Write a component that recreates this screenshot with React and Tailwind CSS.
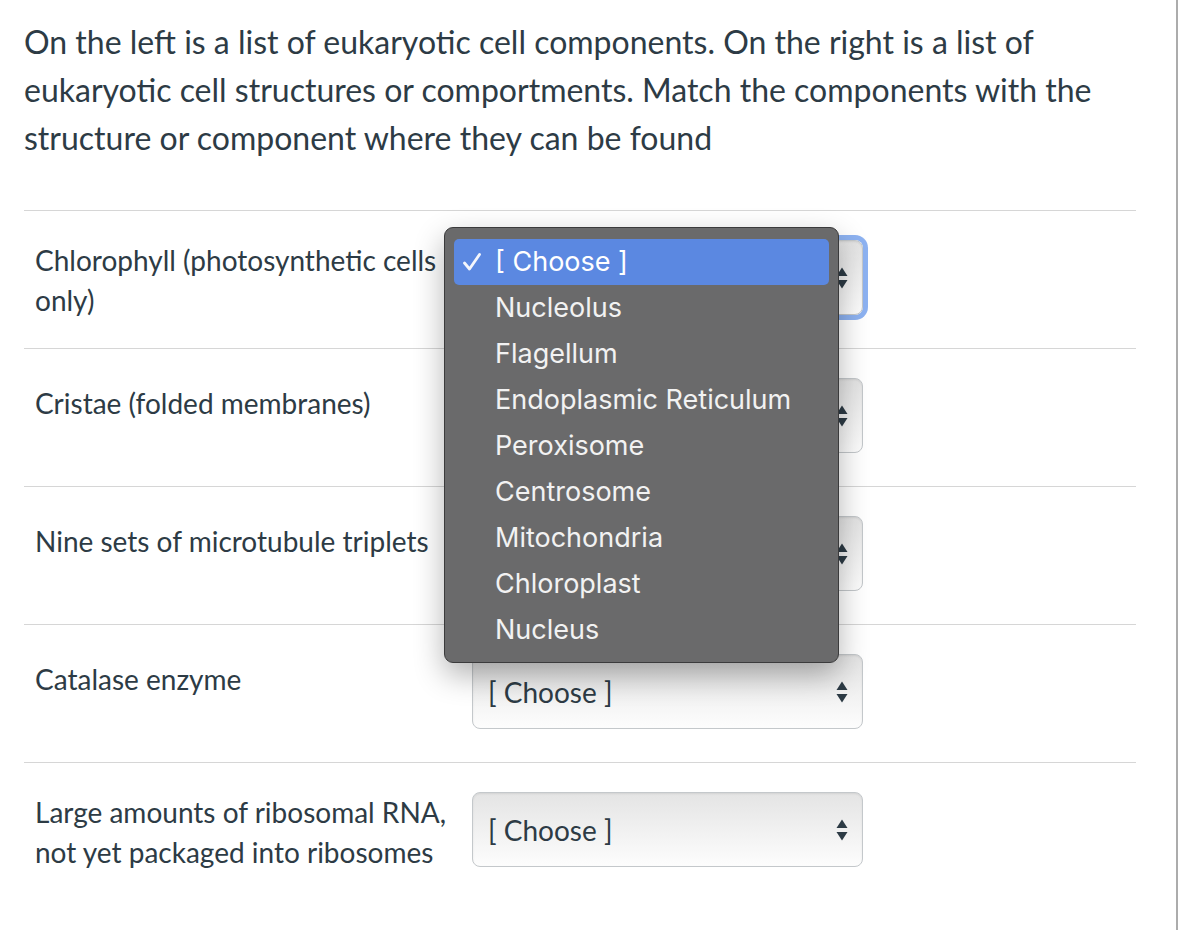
import React from 'react';

const rows = [
    { label: 'Chlorophyll (photosynthetic cells only)', pad: 'pt-0', focused: true, covered: true },
    { label: 'Cristae (folded membranes)', pad: 'pt-[5px]', covered: true },
    { label: 'Nine sets of microtubule triplets', pad: 'pt-[5px]', covered: true },
    { label: 'Catalase enzyme', pad: 'pt-[5px]' },
    { label: 'Large amounts of ribosomal RNA, not yet packaged into ribosomes', pad: 'pt-0' },
];

const options = [
    '[ Choose ]',
    'Nucleolus',
    'Flagellum',
    'Endoplasmic Reticulum',
    'Peroxisome',
    'Centrosome',
    'Mitochondria',
    'Chloroplast',
    'Nucleus',
];

function Arrows() {
    return (
        <svg width="12" height="24" viewBox="0 0 12 24" className="shrink-0">
            <path d="M6 1.5 L11.5 10 L0.5 10 Z" fill="#2d3b45" />
            <path d="M6 22.5 L11.5 14 L0.5 14 Z" fill="#2d3b45" />
        </svg>
    );
}

function FakeSelect({ focused, covered }) {
    return (
        <div
            className={
                'w-[391px] h-[75px] shrink-0 rounded-[8px] border border-[#c4c8cb] bg-gradient-to-b from-[#e4e4e4] to-[#fdfdfd] shadow-[inset_0_1px_2px_rgba(0,0,0,0.08)] flex items-center justify-between pl-[15px] pr-[14px] ' +
                (focused ? 'ring-[5px] ring-[#8db2f1]' : '')
            }
        >
            {/* the open menu hides this label, so keep its space only */}
            <span className={'text-[28px] text-[#2d3b45] ' + (covered ? 'invisible' : '')}>[ Choose ]</span>
            <Arrows />
        </div>
    );
}

function Menu() {
    return (
        <div className="absolute left-[444px] top-[227px] w-[395px] h-[436px] rounded-[9px] border border-[#3b3b3c] bg-[#6a6a6b] shadow-[0_12px_30px_rgba(0,0,0,0.3)] pt-[11px] px-[9px] font-['Inter','Liberation_Sans',sans-serif]">
            {options.map((o, i) => (
                <div
                    key={o}
                    className={
                        'relative h-[46px] flex items-center pl-[41px] rounded-[5px] text-[27px] text-[#f2f2f2] ' +
                        (i === 0 ? 'bg-[#5b88e1] text-white' : '')
                    }
                >
                    {i === 0 && (
                        <svg width="20" height="20" viewBox="0 0 20 20" className="absolute left-[8px] top-[13px]">
                            <path d="M2.5 11 L7.5 17 L17.5 2.5" fill="none" stroke="#f4f6fc" strokeWidth="2.8" strokeLinecap="round" strokeLinejoin="round" />
                        </svg>
                    )}
                    {o}
                </div>
            ))}
        </div>
    );
}

export default function App() {
    return (
        <div className="w-full h-[930px] bg-white font-['Lato','Liberation_Sans',sans-serif] text-[#2d3b45]">
            <div className="relative w-[1178px] h-[930px] border-r-2 border-[#acacac]">
                <p className="pl-[24px] pr-[40px] pt-[18px] text-[32px] leading-[48px]">
                    On the left is a list of eukaryotic cell components. On the right is a list of eukaryotic cell structures or comportments. Match the components with the structure or component where they can be found
                </p>

                <div className="mt-[48px] ml-[24px] w-[1112px]">
                    {rows.map((r) => (
                        <div key={r.label} className="h-[138px] border-t border-[#d6d6d6] flex items-start pt-[29px] pl-[11px]">
                            <div className={'w-[416px] shrink-0 text-[28px] leading-[40px] ' + r.pad}>{r.label}</div>
                            <div className="ml-[21px]">
                                <FakeSelect focused={r.focused} covered={r.covered} />
                            </div>
                        </div>
                    ))}
                </div>

                <Menu />
            </div>
        </div>
    );
}
